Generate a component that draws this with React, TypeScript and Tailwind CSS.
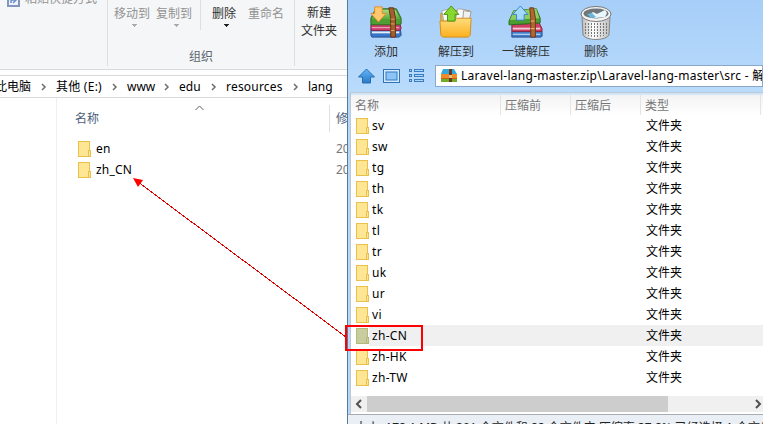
import React from "react";

const FONT = "font-['Noto_Sans','Noto_Sans_CJK_SC',sans-serif]";

function Folder({ selected = false }: { selected?: boolean }) {
  const fill = selected ? "#c8cda0" : "#ffe694";
  const edge = selected ? "#b5b878" : "#e8c04a";
  return (
    <svg width="13" height="16" viewBox="0 0 13 16" className="shrink-0" shapeRendering="crispEdges">
      <rect x="0.5" y="0.5" width="11" height="15" fill={fill} stroke={edge} />
      <rect x="10.5" y="9.5" width="2" height="6" fill={fill} stroke={edge} />
    </svg>
  );
}

function Chevron() {
  return (
    <svg width="6" height="8" viewBox="0 0 6 8" className="shrink-0">
      <path d="M1 1l3 3-3 3" fill="none" stroke="#6e6e6e" strokeWidth="1.5" />
    </svg>
  );
}

function Caret({ color }: { color: string }) {
  return (
    <svg width="5" height="3" viewBox="0 0 5 3" className="mt-px ml-1" shapeRendering="crispEdges">
      <path d="M0 0h5L2.500 3z" fill={color} />
    </svg>
  );
}

function ArchiveAdd() {
  return (
    <svg width="36" height="34" viewBox="0 0 36 36">
      <defs><linearGradient id="greenBook" x2="0" y2="1"><stop stopColor="#a9da82" /><stop offset="1" stopColor="#58a83a" /></linearGradient></defs>
      <path d="M2 25l5-2h26l1 9-2 2H3l-1-2z" fill="#3976ca" stroke="#244d91" />
      <path d="M3 29h29" stroke="#e7f0f8" strokeWidth="2" />
      <path d="M2 21l4-1h27l1 5-2 2H3l-1-2z" fill="#cc3d6b" stroke="#892447" />
      <path d="M3 24h29" stroke="#f0b8c8" />
      <path d="M2 14l5-10h22l5 10v6l-2 1H2z" fill="#4f9d35" stroke="#2d691f" />
      <path d="M8 5h20l5 10H3z" fill="url(#greenBook)" />
      <path d="M21 3h5l2 11v20h-5V14z" fill="#a2602f" stroke="#623012" />
      <path d="M23 15h4m-4 5h4m-4 7h4" stroke="#e2a75d" />
      <path d="M6 2h8v7h4l-8 9-8-9h4z" fill="#ffc870" stroke="#e38b20" />
    </svg>
  );
}

function ExtractFolder() {
  return (
    <svg width="36" height="34" viewBox="0 0 36 36">
      <defs><linearGradient id="folderFront" x2="0" y2="1"><stop stopColor="#ffdd7d" /><stop offset="1" stopColor="#fbb01f" /></linearGradient></defs>
      <path d="M2 15V9h8l2-3h20v18H2z" fill="#efb743" stroke="#c98a1c" />
      <path d="M3 6l9-2 3 13H5zM20 4l9 1-1 12H17z" fill="#fafafa" stroke="#a7a7a7" />
      <path d="M26 6l8 1-2 10h-7z" fill="#f1f1f1" stroke="#999" />
      <path d="M1 17h15l3-3h15l-1 18-2 2H4l-2-2z" fill="url(#folderFront)" stroke="#d58c13" />
      <path d="M13 1l8 9h-4v7H9v-7H5z" fill="#86d82f" stroke="#439315" />
    </svg>
  );
}

function ExtractAll() {
  return (
    <svg width="38" height="34" viewBox="0 0 38 36">
      <path d="M4 28h32v5l-1 1H4z" fill="#437fc9" stroke="#234b92" />
      <path d="M5 31h29" stroke="#dceaf8" />
      <path d="M4 21l29-2 3 6v3H4z" fill="#cf3e66" stroke="#872746" />
      <path d="M5 25h29" stroke="#f2c8d3" strokeWidth="2" />
      <path d="M1 17L6 6l24-2 4 10v5L1 21z" fill="#4c9d30" stroke="#2a6d1e" />
      <path d="M6 6l24-2 3 10-31 2z" fill="#8dcc60" />
      <path d="M23 3h4l2 11v20h-5V14z" fill="#ae6832" stroke="#6d3516" />
      <path d="M24 17h4m-4 8h4" stroke="#efc080" />
      <path d="M13 1l8 9h-4v6H9v-6H5z" fill="#a3d8ff" stroke="#3984cf" />
    </svg>
  );
}

function Trash() {
  return (
    <svg width="34" height="36" viewBox="0 0 34 36" className="-mb-0.5">
      <defs>
        <pattern id="mesh" width="3" height="3" patternUnits="userSpaceOnUse">
          <path d="M0 0h1v2H0z" fill="#777" />
        </pattern>
        <linearGradient id="bin"><stop stopColor="#bbb" /><stop offset=".4" stopColor="#fff" /><stop offset="1" stopColor="#bbb" /></linearGradient>
      </defs>
      <path d="M3 12l1 18c3 6 23 6 26 0l1-18z" fill="url(#bin)" stroke="#858585" />
      <path d="M5 18h24v11c-5 4-20 4-24 0z" fill="url(#mesh)" />
      <ellipse cx="17" cy="9" rx="15" ry="7.5" fill="#f4f4f4" stroke="#777" />
      <ellipse cx="17" cy="8.500" rx="12.500" ry="5" fill="#70777b" />
      <path d="M10 10l4-3 4 2 8-4 2 3-2 4-10 1z" fill="#eaf7fd" />
      <path d="M8 9l5-1 4 4-5 1z" fill="#68b8de" />
    </svg>
  );
}

function ZipIcon() {
  return (
    <svg width="16" height="16" viewBox="0 0 16 16" className="shrink-0">
      <path d="M2 1h11l3 5H0z" fill="#36a7dd" />
      <path d="M0 6h16v5H0z" fill="#f18b27" />
      <path d="M0 11h16v3H0z" fill="#72ad28" />
      <path d="M0 10.500h16" stroke="#cf5a18" />
      <path d="M8 1h3v13H8z" fill="#663b25" />
      <path d="M8 7h3v3H8z" fill="#dfc18a" />
    </svg>
  );
}

function LeftWindow() {
  return (
    <section className="flex h-full w-[347px] shrink-0 flex-col overflow-hidden bg-white">
      <div className="flex h-[70px] shrink-0 border-b border-[#d9dadb] bg-[#f5f6f7] text-[#929292]">
        <div className="flex h-[66px] w-[108px] shrink-0 items-start overflow-hidden border-r border-[#dedfe0]">
          <svg width="13" height="15" viewBox="0 0 13 15" className="-mt-2 ml-[7px] shrink-0">
            <rect x="1" y="1" width="11" height="13" fill="#eef3fb" stroke="#8295bd" strokeWidth="2" />
            <path d="M4 11V8h4m-2-2 3 2-3 3" fill="none" stroke="#6e8fc8" strokeWidth="1.500" />
          </svg>
          <span className="-mt-[10px] ml-[5px] leading-[18px]">粘贴快捷方式</span>
        </div>
        <div className="flex h-[66px] w-[187px] shrink-0 flex-col border-r border-[#dedfe0]">
          <div className="flex h-8">
            <div className="flex w-[93px] gap-[6px] border-r border-[#dedfe0] pt-[5px] pl-[6px]">
              <div className="flex flex-col items-center leading-[18px]"><span>移动到</span><Caret color="#aaa" /></div>
              <div className="flex flex-col items-center leading-[18px]"><span>复制到</span><Caret color="#aaa" /></div>
            </div>
            <div className="flex gap-3 pt-[5px] pl-[11px] leading-[18px]">
              <div className="flex flex-col items-center text-[#303030]"><span>删除</span><Caret color="#222" /></div>
              <span>重命名</span>
            </div>
          </div>
          <span className="mt-[18px] text-center leading-[18px] text-[#5c6670]">组织</span>
        </div>
        <div className="w-[48px] pt-[4px] text-center leading-[18px] text-[#303030]">新建<br />文件夹</div>
      </div>
      <div className="mt-[5px] flex h-[23px] shrink-0 items-center border-y border-[#d9d9d9] text-black">
        <span className="-ml-[5px] w-[46px] shrink-0">此电脑</span><Chevron />
        <span className="ml-[9px] w-[56px] shrink-0 tracking-[0.25px]">其他 (E:)</span><Chevron />
        <span className="ml-[9px] w-[37px] shrink-0">www</span><Chevron />
        <span className="ml-[9px] w-[32px] shrink-0">edu</span><Chevron />
        <span className="ml-[9px] w-[67px] shrink-0 tracking-[0.2px]">resources</span><Chevron />
        <span className="ml-[9px]">lang</span>
      </div>
      <div className="flex min-h-0 grow">
        <div className="w-[57px] shrink-0 border-r border-[#f0f0f0]" />
        <div className="flex w-[272px] shrink-0 flex-col">
          <div className="flex h-[40px] items-start">
            <span className="mt-[12px] ml-[18px] w-[120px] leading-[18px] text-[#4c607a]">名称</span>
            <svg width="9" height="6" viewBox="0 0 9 6" className="mt-[7px]"><path d="M.5 5l4-4 4 4" fill="none" stroke="#606060" /></svg>
          </div>
          {["en", "zh_CN"].map((name) => (
            <div key={name} className="flex h-[21px] items-center gap-[5px] pl-[21px] tracking-[0.2px] text-black"><Folder />{name}</div>
          ))}
        </div>
        <div className="grow">
          <div className="mt-[7px] h-[27px] border-l border-[#e0e0e0] pl-[6px] leading-[27px] text-[#4c607a]">修</div>
          <div className="mt-[6px] pl-[7px] leading-[21px] text-[#777]">20<br />20</div>
        </div>
      </div>
    </section>
  );
}

const names = ["sv", "sw", "tg", "th", "tk", "tl", "tr", "uk", "ur", "vi", "zh-CN", "zh-HK", "zh-TW"];
const tools = [
  { label: "添加", icon: <ArchiveAdd />, width: "w-[72px]" },
  { label: "解压到", icon: <ExtractFolder />, width: "w-[68px]" },
  { label: "一键解压", icon: <ExtractAll />, width: "w-[72px]" },
  { label: "删除", icon: <Trash />, width: "w-[68px]" },
];

function RightWindow() {
  return (
    <section className="flex h-full min-w-0 grow flex-col overflow-hidden border-l border-[#587a9b] bg-[#b5d7fa]">
      <div className="flex h-[92px] shrink-0 flex-col bg-linear-to-b from-[#a6cef8] to-[#b9dbfc]">
        <div className="flex h-[65px] shrink-0 pt-[5px] pl-[2px] text-[#303030]">
          {tools.map((tool) => (
            <div key={tool.label} className={"flex shrink-0 flex-col items-center " + tool.width}>
              {tool.icon}<span className="mt-[4px] leading-[18px]">{tool.label}</span>
            </div>
          ))}
        </div>
        <div className="flex items-center pl-[10px]">
          <svg width="67" height="18" viewBox="0 0 67 18" className="shrink-0">
            <defs><linearGradient id="up" x2="0" y2="1"><stop stopColor="#63b6fa" /><stop offset="1" stopColor="#2879c9" /></linearGradient></defs>
            <path d="M8.500 2l8 8h-4v6h-8v-6h-4z" fill="url(#up)" stroke="#286ead" />
            <rect x="25.500" y="2.500" width="16" height="13" fill="#d4eaff" stroke="#3274b6" />
            <rect x="28" y="5" width="11" height="8" fill="#8cc4f7" stroke="#347bc0" />
            {[2.5, 7.5, 12.5].map((y) => <g key={y} fill="#aed4fa" stroke="#397cc2"><rect x="51.500" y={y} width="2" height="2" /><rect x="56.500" y={y} width="9" height="2" /></g>)}
          </svg>
          <div className="ml-[10px] flex h-[22px] min-w-0 grow items-center overflow-hidden border border-[#8aa9c8] bg-white pl-[5px] whitespace-nowrap text-black">
            <ZipIcon /><span className="ml-[4px] tracking-[0.27px]">Laravel-lang-master.zip\Laravel-lang-master\src - 解压</span>
          </div>
        </div>
      </div>
      <div className="ml-[2px] flex h-[322px] shrink-0 flex-col border-t border-l border-[#bcc9d5] bg-white">
        <div className="flex h-[22px] shrink-0 border-t-2 border-[#d3e6f7] bg-linear-to-b from-[#f3f3f3] to-white leading-[21px] text-[#777]">
          <span className="w-[150px] shrink-0 border-r border-[#e4e4e4] pl-1">名称</span>
          <span className="w-[70px] shrink-0 border-r border-[#e4e4e4] pl-1">压缩前</span>
          <span className="w-[70px] shrink-0 border-r border-[#e4e4e4] pl-1">压缩后</span>
          <span className="w-[120px] shrink-0 border-r border-[#e4e4e4] pl-1">类型</span>
        </div>
        <div className="flex h-[281px] shrink-0 flex-col text-black">
          {names.map((name) => (
            <div key={name} className="flex h-[21px] shrink-0 items-center pl-[5px]">
              <Folder selected={name === "zh-CN"} />
              <div className={"flex h-full grow items-center pt-px pl-[3px] " + (name === "zh-CN" ? "bg-[#f0f0f0]" : "")}>
                <span className="w-[274px] tracking-[0.3px]">{name}</span><span>文件夹</span>
              </div>
            </div>
          ))}
        </div>
        <div className="flex h-[16px] shrink-0 items-center bg-[#f0f0f0]">
          <svg width="16" height="16" viewBox="0 0 16 16" className="shrink-0"><path d="M10 4L6 8l4 4" fill="none" stroke="#505050" strokeWidth="2" /></svg>
          <div className="h-full w-[301px] bg-[#cdcdcd]" />
          <svg width="16" height="16" viewBox="0 0 16 16" className="ml-auto"><path d="M9 4l4 4-4 4" fill="none" stroke="#505050" strokeWidth="2" /></svg>
        </div>
      </div>
      <div className="h-[10px] shrink-0 overflow-hidden border-t border-[#a9adb2] bg-[#e9eff5] pt-[4px] pl-[7px] leading-[18px] whitespace-nowrap text-[#222]">
        大小: 178.1 MB 共 201 个文件和 88 个文件夹 压缩率 37.8% 已经选择 1 个文件夹
      </div>
    </section>
  );
}

export default function App() {
  return (
    <main className={"relative flex h-[424px] w-[763px] overflow-hidden bg-white text-[12px] " + FONT}>
      <LeftWindow />
      <RightWindow />
      <svg className="absolute inset-0" width="763" height="424" viewBox="0 0 763 424">
        <path d="M138 182L346 337" stroke="#e00000" shapeRendering="crispEdges" />
        <path d="M133 178l10 2-5 7z" fill="#f00" />
        <rect x="346" y="326" width="76" height="24" fill="none" stroke="#f00" strokeWidth="2" />
      </svg>
    </main>
  );
}
